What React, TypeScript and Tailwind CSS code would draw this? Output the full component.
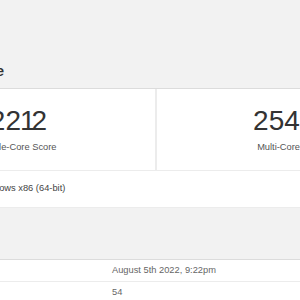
import React from "react";

export default function App() {
  return (
    <div className="w-[300px] h-[300px] overflow-hidden bg-[#f2f2f2] font-['Liberation_Sans',Arial,sans-serif]">
      <div className="ml-[-121px] w-[548px]">
        <div className="h-[88px] flex items-end pb-[9px]">
          <div className="w-[125px] flex justify-end">
            <div className="whitespace-nowrap text-[14px] font-bold leading-[16px] text-[#333]">Geekbench 5 Score</div>
          </div>
        </div>
        <div className="bg-white border-t border-[#dcdcdc]">
          <div className="grid grid-cols-[278px_1fr] h-[81px]">
            <div className="border-r-2 border-[#ececec] flex flex-col items-center pt-[16px] pl-[3px]">
              <div className="text-[28px] leading-[32px] text-[#333] whitespace-nowrap">
                22<span className="ml-[-1px] tracking-[-4px]">1</span>2
              </div>
              <div className="mt-[4px] text-[9.3px] leading-[12px] text-[#555] whitespace-nowrap">Single-Core Score</div>
            </div>
            <div className="flex flex-col items-center pt-[16px]">
              <div className="text-[28px] leading-[32px] text-[#333]">25463</div>
              <div className="mt-[4px] text-[9.3px] leading-[12px] text-[#555] whitespace-nowrap">Multi-Core Score</div>
            </div>
          </div>
          <div className="border-t border-[#ececec] h-[38px] flex items-center pl-[99px] border-b border-[#dcdcdc]">
            <span className="text-[9.3px] text-[#444] whitespace-nowrap">Windows x86 (64-bit)</span>
          </div>
        </div>
        <div className="h-[51px]" />
        <div className="bg-white border-t border-[#dcdcdc]">
          <div className="h-[22px] flex items-center border-b border-[#ececec]">
            <span className="pl-[233px] text-[9.3px] text-[#666] whitespace-nowrap">August 5th 2022, 9:22pm</span>
          </div>
          <div className="h-[22px] flex items-center">
            <span className="pl-[233px] text-[9.3px] text-[#666] whitespace-nowrap">54</span>
          </div>
        </div>
      </div>
    </div>
  );
}
